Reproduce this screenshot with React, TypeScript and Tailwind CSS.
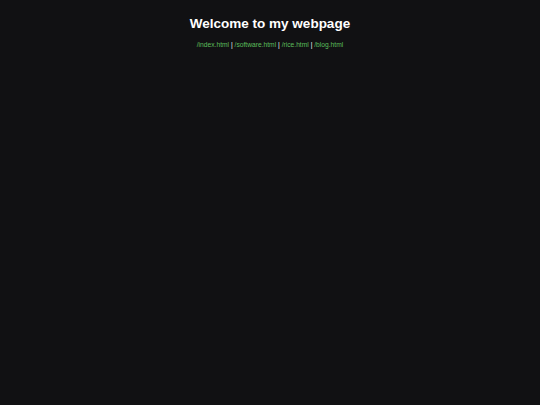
export default function App() {
  const links = ['/index.html', '/software.html', '/rice.html', '/blog.html'];
  return (
    <div className="min-h-screen bg-[#111113] text-white font-['Liberation_Sans',Arial,sans-serif]">
      <div className="flex flex-col items-center pt-[15px]">
        <h1 className="text-[13.5px] font-bold leading-[18px]">Welcome to my webpage</h1>
        <nav className="mt-[7px] text-[6.7px] leading-[9px] text-white">
          {links.map((l, i) => (
            <span key={l}>
              {i > 0 && ' | '}
              <a href={l} className="text-[#5cbf5c]">{l}</a>
            </span>
          ))}
        </nav>
      </div>
    </div>
  );
}
